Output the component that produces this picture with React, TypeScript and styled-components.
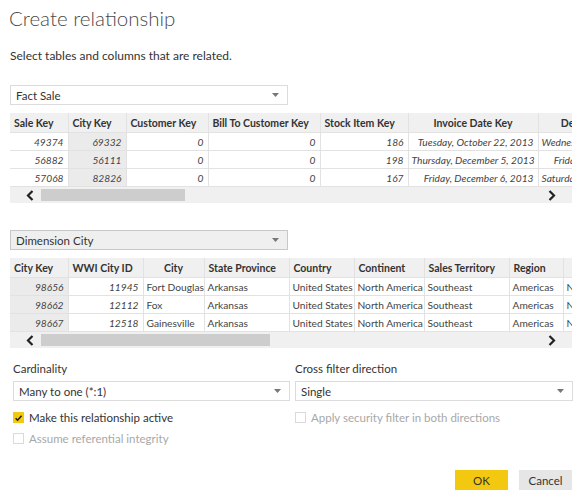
import styled, { createGlobalStyle } from "styled-components";

const GlobalStyle = createGlobalStyle`
  html, body {
    margin: 0;
    padding: 0;
    background: #ffffff;
  }
  body {
    font-family: Lato, "Open Sans", "Liberation Sans", sans-serif;
    color: #333333;
  }
`;

interface Column {
  label: string;
  width: number;
  align?: "left" | "right";
  head?: "left" | "center";
  italic?: boolean;
  selected?: boolean;
}

const factColumns: Column[] = [
  { label: "Sale Key", width: 58, align: "right", italic: true },
  { label: "City Key", width: 58, align: "right", italic: true, selected: true },
  { label: "Customer Key", width: 82, align: "right", italic: true },
  { label: "Bill To Customer Key", width: 112, align: "right", italic: true },
  { label: "Stock Item Key", width: 88, align: "right", italic: true },
  { label: "Invoice Date Key", width: 130, align: "right", italic: true, head: "center" },
  { label: "Delivery Date Key", width: 130, align: "right", italic: true, head: "center" },
];

const factRows = [
  ["49374", "69332", "0", "0", "186", "Tuesday, October 22, 2013", "Wednesday, October 23, 2013"],
  ["56882", "56111", "0", "0", "198", "Thursday, December 5, 2013", "Friday, December 6, 2013"],
  ["57068", "82826", "0", "0", "167", "Friday, December 6, 2013", "Saturday, December 7, 2013"],
];

const cityColumns: Column[] = [
  { label: "City Key", width: 58, align: "right", italic: true, selected: true },
  { label: "WWI City ID", width: 75, align: "right", italic: true },
  { label: "City", width: 61, head: "center" },
  { label: "State Province", width: 85 },
  { label: "Country", width: 65 },
  { label: "Continent", width: 70 },
  { label: "Sales Territory", width: 85 },
  { label: "Region", width: 54 },
  { label: "Subregion", width: 100, head: "center" },
];

const cityRows = [
  ["98656", "11945", "Fort Douglas", "Arkansas", "United States", "North America", "Southeast", "Americas", "Northern America"],
  ["98662", "12112", "Fox", "Arkansas", "United States", "North America", "Southeast", "Americas", "Northern America"],
  ["98667", "12518", "Gainesville", "Arkansas", "United States", "North America", "Southeast", "Americas", "Northern America"],
];

function Caret() {
  return (
    <svg width="7" height="4" viewBox="0 0 7 4">
      <path d="M0 0 L7 0 L3.5 4 Z" fill="#777" />
    </svg>
  );
}

function ChevronLeft() {
  return (
    <svg width="8" height="11" viewBox="0 0 8 11">
      <path d="M6.5 1 L2 5.5 L6.5 10" stroke="#222" strokeWidth="2.2" fill="none" />
    </svg>
  );
}

function ChevronRight() {
  return (
    <svg width="8" height="11" viewBox="0 0 8 11">
      <path d="M1.5 1 L6 5.5 L1.5 10" stroke="#222" strokeWidth="2.2" fill="none" />
    </svg>
  );
}

function Check() {
  return (
    <svg width="10" height="10" viewBox="0 0 10 10">
      <path d="M1.8 5.2 L4 7.5 L8.4 2.4" stroke="#1a1a1a" strokeWidth="1.6" fill="none" />
    </svg>
  );
}

function DataGrid({
  columns,
  rows,
  thumbWidth,
}: {
  columns: Column[];
  rows: string[][];
  thumbWidth: number;
}) {
  const total = columns.reduce((s, c) => s + c.width, 0);
  return (
    <GridWrap>
      <Viewport>
        <Table style={{ width: total }}>
          <colgroup>
            {columns.map((c, i) => (
              <col key={i} style={{ width: c.width }} />
            ))}
          </colgroup>
          <thead>
            <tr>
              {columns.map((c, i) => (
                <HeadCell key={i} $align={c.head ?? "left"}>
                  {c.label}
                </HeadCell>
              ))}
            </tr>
          </thead>
          <tbody>
            {rows.map((r, ri) => (
              <tr key={ri}>
                {r.map((v, ci) => (
                  <BodyCell
                    key={ci}
                    $align={columns[ci].align ?? "left"}
                    $italic={!!columns[ci].italic}
                    $selected={!!columns[ci].selected}
                  >
                    {v}
                  </BodyCell>
                ))}
              </tr>
            ))}
          </tbody>
        </Table>
      </Viewport>
      <ScrollBar>
        <ArrowBtn $side="left">
          <ChevronLeft />
        </ArrowBtn>
        <Track>
          <Thumb style={{ width: thumbWidth }} />
        </Track>
        <ArrowBtn $side="right">
          <ChevronRight />
        </ArrowBtn>
      </ScrollBar>
    </GridWrap>
  );
}

export default function App() {
  return (
    <>
      <GlobalStyle />
      <Dialog>
        <Title>Create relationship</Title>
        <Subtitle>Select tables and columns that are related.</Subtitle>

        <TableSelect $active={false}>
          <span>Fact Sale</span>
          <Caret />
        </TableSelect>
        <DataGrid columns={factColumns} rows={factRows} thumbWidth={144} />

        <TableSelect $active>
          <span>Dimension City</span>
          <Caret />
        </TableSelect>
        <DataGrid columns={cityColumns} rows={cityRows} thumbWidth={229} />

        <Options>
          <OptionColumn>
            <FieldLabel>Cardinality</FieldLabel>
            <Select>
              <span>Many to one (*:1)</span>
              <Caret />
            </Select>
            <CheckRow $disabled={false}>
              <Box $checked>
                <Check />
              </Box>
              Make this relationship active
            </CheckRow>
            <CheckRow $disabled>
              <Box $checked={false} />
              Assume referential integrity
            </CheckRow>
          </OptionColumn>
          <OptionColumn>
            <FieldLabel>Cross filter direction</FieldLabel>
            <Select>
              <span>Single</span>
              <Caret />
            </Select>
            <CheckRow $disabled>
              <Box $checked={false} />
              Apply security filter in both directions
            </CheckRow>
          </OptionColumn>
        </Options>

        <Footer>
          <Button $primary>OK</Button>
          <Button $primary={false}>Cancel</Button>
        </Footer>
      </Dialog>
    </>
  );
}

const Dialog = styled.div`
  width: 585px;
  height: 495px;
  box-sizing: border-box;
  padding: 0 13px 0 10px;
  display: flex;
  flex-direction: column;
  overflow: hidden;
`;

const Title = styled.h1`
  margin: 3px 0 0 -1px;
  font-size: 20.5px;
  font-weight: 300;
  line-height: 30px;
  color: #4a4a4a;
`;

const Subtitle = styled.p`
  margin: 14px 0 0;
  font-size: 12px;
  line-height: 17px;
  color: #333;
`;

const TableSelect = styled.div<{ $active: boolean }>`
  margin-top: ${(p) => (p.$active ? "27px" : "21px")};
  width: 278px;
  height: 20px;
  box-sizing: border-box;
  border: 1px solid ${(p) => (p.$active ? "#c8c8c8" : "#dcdcdc")};
  background: ${(p) => (p.$active ? "#efefef" : "#ffffff")};
  display: flex;
  align-items: center;
  justify-content: space-between;
  padding: 0 8px 0 5px;
  font-size: 11.5px;
  color: #333;
`;

const GridWrap = styled.div`
  margin-top: 8px;
  width: 562px;
`;

const Viewport = styled.div`
  width: 562px;
  overflow: hidden;
`;

const Table = styled.table`
  table-layout: fixed;
  border-collapse: collapse;
  font-size: 10.2px;
`;

const HeadCell = styled.th<{ $align: string }>`
  height: 19px;
  padding: 0 4px;
  text-align: ${(p) => p.$align};
  background: #f0f0f0;
  border-right: 1px solid #e2e2e2;
  font-size: 10.5px;
  font-weight: 700;
  color: #333;
  white-space: nowrap;
  overflow: hidden;
`;

const BodyCell = styled.td<{ $align: string; $italic: boolean; $selected: boolean }>`
  height: 17px;
  padding: 0 4px 0 3px;
  text-align: ${(p) => p.$align};
  font-style: ${(p) => (p.$italic ? "italic" : "normal")};
  background: ${(p) => (p.$selected ? "#ebebeb" : "#ffffff")};
  border: 1px solid #e2e2e2;
  border-left: none;
  color: #444;
  white-space: nowrap;
  overflow: hidden;
`;

const ScrollBar = styled.div`
  height: 16px;
  background: #f0f0f0;
  display: flex;
  align-items: center;
`;

const ArrowBtn = styled.div<{ $side: "left" | "right" }>`
  width: 31px;
  height: 16px;
  box-sizing: border-box;
  display: flex;
  align-items: center;
  justify-content: ${(p) => (p.$side === "left" ? "flex-end" : "flex-start")};
  padding: ${(p) => (p.$side === "left" ? "0 7px 0 0" : "0 0 0 7px")};
`;

const Track = styled.div`
  flex: 1;
  height: 12px;
  display: flex;
`;

const Thumb = styled.div`
  height: 12px;
  background: #cdcdcd;
`;

const Options = styled.div`
  margin-top: 12px;
  display: grid;
  grid-template-columns: 277px 278px;
  column-gap: 5px;
  padding-left: 3px;
`;

const OptionColumn = styled.div`
  display: flex;
  flex-direction: column;
`;

const FieldLabel = styled.div`
  font-size: 11.5px;
  line-height: 17px;
  color: #333;
`;

const Select = styled.div`
  margin-top: 4px;
  height: 20px;
  box-sizing: border-box;
  border: 1px solid #dcdcdc;
  display: flex;
  align-items: center;
  justify-content: space-between;
  padding: 0 8px 0 5px;
  font-size: 11.5px;
  color: #333;
`;

const CheckRow = styled.label<{ $disabled: boolean }>`
  margin-top: 6px;
  &:nth-child(3) {
    margin-top: 9px;
  }
  display: flex;
  align-items: center;
  gap: 5px;
  font-size: 11.5px;
  line-height: 15px;
  color: ${(p) => (p.$disabled ? "#a8a8a8" : "#333")};
`;

const Box = styled.span<{ $checked: boolean }>`
  width: 11px;
  height: 11px;
  box-sizing: border-box;
  display: inline-flex;
  align-items: center;
  justify-content: center;
  background: ${(p) => (p.$checked ? "#f2c811" : "#ffffff")};
  border: 1px solid ${(p) => (p.$checked ? "#f2c811" : "#dadada")};
`;

const Footer = styled.div`
  margin-top: auto;
  margin-bottom: 5px;
  display: flex;
  justify-content: flex-end;
  gap: 11px;
`;

const Button = styled.button<{ $primary: boolean }>`
  width: 53px;
  height: 20px;
  border: none;
  padding: 0;
  font-family: inherit;
  font-size: 11.5px;
  color: #333;
  background: ${(p) => (p.$primary ? "#f2c811" : "#e6e6e6")};
`;
